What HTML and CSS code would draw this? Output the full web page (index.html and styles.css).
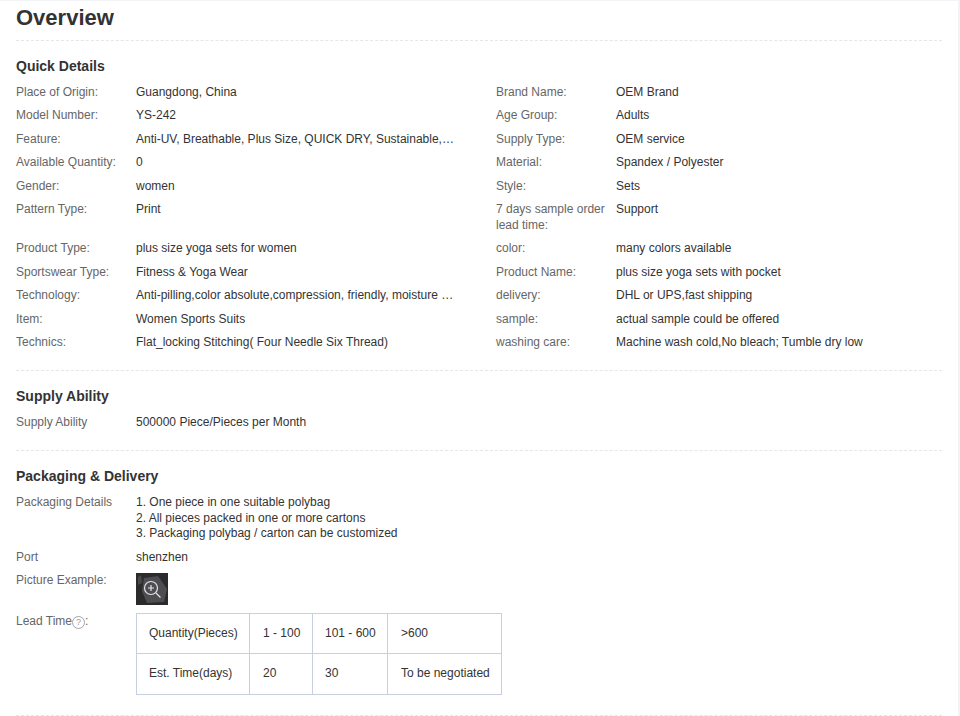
FILE: index.html
```html
<!DOCTYPE html>
<html lang="en">
<head>
<meta charset="utf-8">
<title>Overview</title>
<link rel="stylesheet" href="styles.css">
</head>
<body>
<main class="panel">
  <h1 class="page-title">Overview</h1>
  <section class="block block-quick">
    <h2 class="block-title">Quick Details</h2>
    <div class="details">
      <div class="item"><span class="label">Place of Origin:</span><span class="value">Guangdong, China</span></div>
      <div class="item"><span class="label">Brand Name:</span><span class="value">OEM Brand</span></div>
      <div class="item"><span class="label">Model Number:</span><span class="value">YS-242</span></div>
      <div class="item"><span class="label">Age Group:</span><span class="value">Adults</span></div>
      <div class="item"><span class="label">Feature:</span><span class="value clip">Anti-UV, Breathable, Plus Size, QUICK DRY, Sustainable, Seamless</span></div>
      <div class="item"><span class="label">Supply Type:</span><span class="value">OEM service</span></div>
      <div class="item"><span class="label">Available Quantity:</span><span class="value">0</span></div>
      <div class="item"><span class="label">Material:</span><span class="value">Spandex / Polyester</span></div>
      <div class="item"><span class="label">Gender:</span><span class="value">women</span></div>
      <div class="item"><span class="label">Style:</span><span class="value">Sets</span></div>
      <div class="item"><span class="label">Pattern Type:</span><span class="value">Print</span></div>
      <div class="item"><span class="label">7 days sample order lead time:</span><span class="value">Support</span></div>
      <div class="item"><span class="label">Product Type:</span><span class="value">plus size yoga sets for women</span></div>
      <div class="item"><span class="label">color:</span><span class="value">many colors available</span></div>
      <div class="item"><span class="label">Sportswear Type:</span><span class="value">Fitness &amp; Yoga Wear</span></div>
      <div class="item"><span class="label">Product Name:</span><span class="value">plus size yoga sets with pocket</span></div>
      <div class="item"><span class="label">Technology:</span><span class="value clip">Anti-pilling,color absolute,compression, friendly, moisture wicking</span></div>
      <div class="item"><span class="label">delivery:</span><span class="value">DHL or UPS,fast shipping</span></div>
      <div class="item"><span class="label">Item:</span><span class="value">Women Sports Suits</span></div>
      <div class="item"><span class="label">sample:</span><span class="value">actual sample could be offered</span></div>
      <div class="item"><span class="label">Technics:</span><span class="value">Flat_locking Stitching( Four Needle Six Thread)</span></div>
      <div class="item"><span class="label">washing care:</span><span class="value">Machine wash cold,No bleach; Tumble dry low</span></div>
    </div>
  </section>
  <section class="block block-supply">
    <h2 class="block-title">Supply Ability</h2>
    <div class="item"><span class="label">Supply Ability</span><span class="value">500000 Piece/Pieces per Month</span></div>
  </section>
  <section class="block block-packaging">
    <h2 class="block-title">Packaging &amp; Delivery</h2>
    <div class="item"><span class="label">Packaging Details</span><span class="value">1. One piece in one suitable polybag<br>2. All pieces packed in one or more cartons<br>3. Packaging polybag / carton can be customized</span></div>
    <div class="item"><span class="label">Port</span><span class="value">shenzhen</span></div>
    <div class="item item-picture"><span class="label">Picture Example:</span>
      <span class="thumb">
        <svg width="32" height="32" viewBox="0 0 32 32" aria-hidden="true">
          <rect width="32" height="32" fill="#2b2b2b"/>
          <path d="M2 4 L5 2 L6 10 L2 12Z" fill="#4a4a44"/>
          <path d="M8 5 L22 3 L31 16 L28 29 L11 30 L6 18Z" fill="#4e4e52"/>
          <circle cx="15" cy="15" r="6.5" fill="none" stroke="#e4e4e4" stroke-width="1.2"/>
          <path d="M12 15 H18 M15 12 V18 M20 20 L24.5 24.5" fill="none" stroke="#e4e4e4" stroke-width="1.2"/>
        </svg>
      </span>
    </div>
    <div class="item item-lead"><span class="label">Lead Time<span class="help">?</span>:</span>
      <table class="lead">
        <tr><td class="c1">Quantity(Pieces)</td><td class="c2">1 - 100</td><td class="c3">101 - 600</td><td class="c4">&gt;600</td></tr>
        <tr class="row2"><td>Est. Time(days)</td><td>20</td><td>30</td><td>To be negotiated</td></tr>
      </table>
    </div>
  </section>
</main>
</body>
</html>
```
FILE: styles.css
```css
html, body {
  margin: 0;
  padding: 0;
  height: 716px;
  overflow: hidden;
  background: #f2f3f7;
}
body {
  font-family: "Liberation Sans", Arial, sans-serif;
  font-size: 12px;
  line-height: 15.5px;
  color: #333;
}
.panel {
  box-sizing: border-box;
  width: 958px;
  height: 715px;
  margin-top: 1px;
  padding: 0 16px;
  background: #fff;
}
.page-title {
  margin: 0;
  height: 39px;
  border-bottom: 1px dashed #e6e6e6;
  font-size: 22px;
  line-height: 34px;
  font-weight: bold;
  width: 926px;
}
.block {
  width: 926px;
  border-bottom: 1px dashed #e6e6e6;
}
.block-title {
  margin: 0 0 9px;
  font-size: 14px;
  line-height: 18px;
  font-weight: bold;
  color: #333;
}
.block-quick { padding-top: 16px; height: 313px; }
.block-quick .block-title { margin-bottom: 9.5px; }
.block-supply { padding-top: 16px; height: 63px; }
.block-packaging { padding-top: 16px; height: 248px; }
.block-packaging .block-title, .block-supply .block-title { margin-bottom: 10px; }
.details {
  display: grid;
  grid-template-columns: 480px 446px;
}
.item {
  display: flex;
  padding-bottom: 8px;
  align-items: flex-start;
}
.label {
  flex: 0 0 112px;
  margin-right: 8px;
  color: #666;
}
.value {
  flex: 0 1 auto;
  min-width: 0;
  color: #333;
}
.clip {
  width: 318px;
  white-space: nowrap;
  overflow: hidden;
  text-overflow: ellipsis;
}
.thumb { display: block; width: 32px; height: 32px; }
.thumb svg { display: block; }
.item-lead .label { padding-top: 1px; }
.help {
  display: inline-block;
  box-sizing: border-box;
  width: 13px;
  height: 13px;
  border: 1px solid #a5a5a5;
  border-radius: 50%;
  font-size: 9px;
  line-height: 11px;
  text-align: center;
  color: #999;
  vertical-align: 0;
}
.lead {
  border-collapse: collapse;
  table-layout: fixed;
  width: 365px;
  color: #333;
}
.lead td {
  box-sizing: border-box;
  height: 40px;
  padding: 0 0 0 13px;
  border: 1px solid #c6d0de;
  white-space: nowrap;
}
.lead td:first-child, .lead td:nth-child(3) { padding-left: 12px; }
.lead .row2 td { height: 41px; }
.lead .c1 { width: 113px; }
.lead .c2 { width: 63px; }
.lead .c3 { width: 75px; }
.lead .c4 { width: 114px; }
```
